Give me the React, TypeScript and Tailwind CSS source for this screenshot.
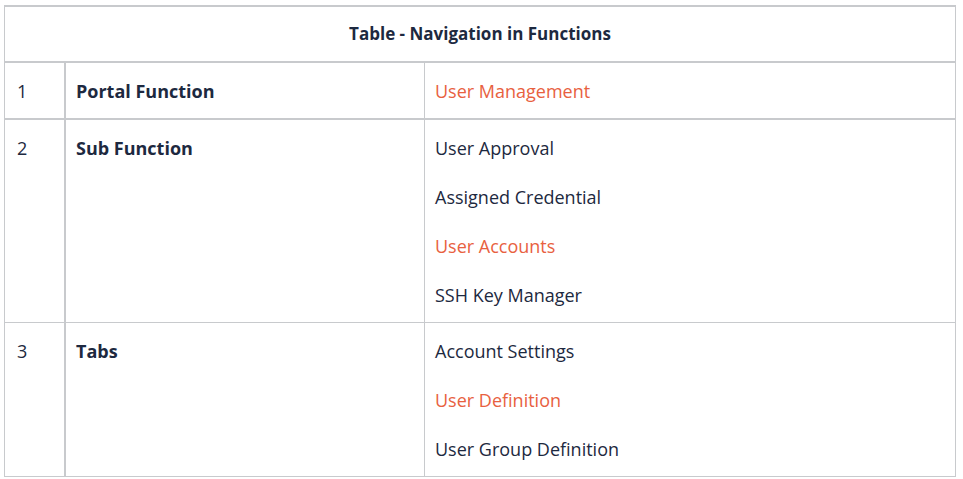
export default function App() {
  const O = "text-[#e8613f]";
  const N = "text-[#1d2940]";
  const rows: { n: string; label: string; items: [string, boolean][] ; thick?: boolean}[] = [
    { n: "1", label: "Portal Function", items: [["User Management", true]], thick: true },
    { n: "2", label: "Sub Function", items: [["User Approval", false], ["Assigned Credential", false], ["User Accounts", true], ["SSH Key Manager", false]] },
    { n: "3", label: "Tabs", items: [["Account Settings", false], ["User Definition", true], ["User Group Definition", false]] },
  ];
  return (
    <div className="w-[963px] h-[479px] bg-white pl-[4px] pt-[5px]" style={{ fontFamily: '"Open Sans", sans-serif' }}>
      <div className="w-[952px] border border-[#c8cacd] border-t-2">
        <div className={`h-[56px] flex items-center justify-center text-[17px] font-bold ${N} border-b-2 border-[#c8cacd]`}>Table - Navigation in Functions</div>
        {rows.map((r, i) => (
          <div key={r.n} className={`flex ${i < 2 ? (r.thick ? "border-b-2" : "border-b") : ""} border-[#c8cacd]`}>
            <div className={`w-[61px] pl-[12px] pt-[4px] h-auto text-[18px] leading-[49px] ${N} border-r-2 border-[#c8cacd]`}>{r.n}</div>
            <div className={`w-[359px] pl-[10px] pt-[4px] text-[18px] leading-[49px] font-bold ${N} border-r border-[#c8cacd]`}>{r.label}</div>
            <div className="flex-1 pl-[10px] pt-[4px] pb-[2px] text-[18px]">
              {r.items.map(([t, o]) => (
                <div key={t} className={`h-[49px] leading-[49px] ${o ? O : N}`}>{t}</div>
              ))}
            </div>
          </div>
        ))}
      </div>
    </div>
  );
}
